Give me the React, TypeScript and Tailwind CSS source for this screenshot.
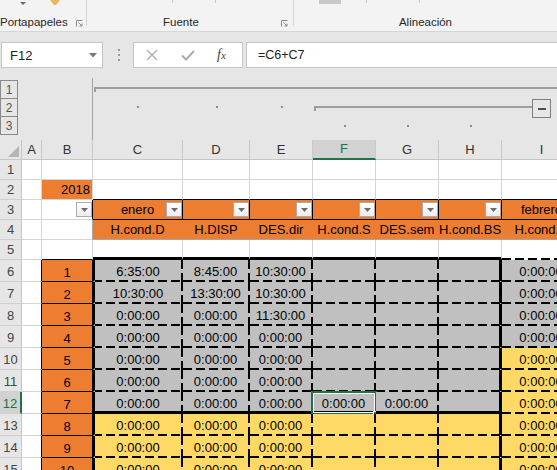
import React from 'react'

type Edge = 'grid' | 'none' | 'thin' | 'gray' | 'thick' | 'dash'
type Fill = 'white' | 'orange' | 'gray' | 'yellow'
type Col = 'A' | 'B' | 'C' | 'D' | 'E' | 'F' | 'G' | 'H' | 'I'

interface CellSpec {
  fill: Fill
  r: Edge
  b: Edge
  l?: boolean
  text?: string
  align?: 'center' | 'right'
  drop?: boolean
  sel?: boolean
}

const COLS: Col[] = ['A', 'B', 'C', 'D', 'E', 'F', 'G', 'H', 'I']
const ROWS = Array.from({ length: 15 }, (_, i) => i + 1)

const colW: Record<Col, string> = {
  A: 'w-[20px]',
  B: 'w-[51px]',
  C: 'w-[90px]',
  D: 'w-[67px]',
  E: 'w-[63px]',
  F: 'w-[63px]',
  G: 'w-[63px]',
  H: 'w-[63px]',
  I: 'w-[80px]',
}

const FILL: Record<Fill, string> = {
  white: 'bg-white',
  orange: 'bg-[#ed7d31]',
  gray: 'bg-[#c0c0c0]',
  yellow: 'bg-[#ffd966]',
}

const R: Record<Edge, string> = {
  grid: 'border-r border-r-[#d4d4d4]',
  none: 'border-r border-r-transparent',
  thin: 'border-r border-r-black',
  gray: 'border-r border-r-[#a6a6a6]',
  thick: 'border-r-[3px] border-r-black',
  dash: 'border-r-2 border-r-transparent',
}

const B: Record<Edge, string> = {
  grid: 'border-b border-b-[#d4d4d4]',
  none: 'border-b border-b-transparent',
  thin: 'border-b border-b-black',
  gray: 'border-b border-b-[#a6a6a6]',
  thick: 'border-b-[3px] border-b-black',
  dash: 'border-b-2 border-b-transparent',
}

// dashed borders drawn as gradients so the dash rhythm looks like Excel's
const DASH_R =
  '[background-image:repeating-linear-gradient(180deg,#000_0_9px,transparent_9px_13px)] [background-size:2px_100%] [background-position:right_top] [background-repeat:no-repeat] [background-origin:border-box]'
const DASH_B =
  '[background-image:repeating-linear-gradient(90deg,#000_0_9px,transparent_9px_13px)] [background-size:100%_2px] [background-position:left_bottom] [background-repeat:no-repeat] [background-origin:border-box]'
const DASH_RB =
  '[background-image:repeating-linear-gradient(180deg,#000_0_9px,transparent_9px_13px),repeating-linear-gradient(90deg,#000_0_9px,transparent_9px_13px)] [background-size:2px_100%,100%_2px] [background-position:right_top,left_bottom] [background-repeat:no-repeat] [background-origin:border-box]'

const HEAD: Partial<Record<Col, string>> = {
  C: 'H.cond.D',
  D: 'H.DISP',
  E: 'DES.dir',
  F: 'H.cond.S',
  G: 'DES.sem',
  H: 'H.cond.BS',
  I: 'H.cond.D',
}

const TIMES: Record<number, string[]> = {
  6: ['6:35:00', '8:45:00', '10:30:00'],
  7: ['10:30:00', '13:30:00', '10:30:00'],
  8: ['0:00:00', '0:00:00', '11:30:00'],
}

const grid: CellSpec = { fill: 'white', r: 'grid', b: 'grid' }

function getSpec(r: number, c: Col): CellSpec {
  const i = COLS.indexOf(c)
  const block = i >= 2 && i <= 7
  if (r === 1) return grid
  if (r === 2) {
    if (c === 'A') return grid
    if (c === 'B') return { fill: 'orange', r: 'grid', b: 'grid', text: '2018', align: 'right' }
    return { fill: 'white', r: 'grid', b: 'thin' }
  }
  if (r === 3) {
    if (c === 'A') return grid
    if (c === 'B') return { fill: 'white', r: 'thin', b: 'grid', drop: true }
    return {
      fill: 'orange',
      r: 'thin',
      b: 'thin',
      drop: true,
      text: c === 'C' ? 'enero' : c === 'I' ? 'febrero' : undefined,
    }
  }
  if (r === 4) {
    if (c === 'A') return grid
    if (c === 'B') return { fill: 'white', r: 'gray', b: 'grid' }
    return { fill: 'orange', r: 'none', b: 'gray', text: HEAD[c] }
  }
  if (r === 5) {
    if (c === 'A') return grid
    if (c === 'B') return { fill: 'white', r: 'grid', b: 'thin' }
    if (block) return { fill: 'white', r: 'grid', b: 'thick' }
    return { fill: 'white', r: 'grid', b: 'dash' }
  }
  if (c === 'A') return { fill: 'white', r: 'thin', b: 'grid' }
  if (c === 'B') return { fill: 'orange', r: 'thin', b: 'thin', text: String(r - 5) }
  if (block) {
    let text: string | undefined
    if (i <= 4) text = TIMES[r]?.[i - 2] ?? '0:00:00'
    if (r === 12 && (c === 'F' || c === 'G')) text = '0:00:00'
    return {
      fill: r <= 12 ? 'gray' : 'yellow',
      r: c === 'H' ? 'thick' : 'dash',
      b: r === 12 ? 'thick' : 'dash',
      l: c === 'C',
      text,
      sel: r === 12 && c === 'F',
    }
  }
  return { fill: r <= 9 ? 'gray' : 'yellow', r: 'dash', b: 'dash', text: '0:00:00' }
}

function DropButton() {
  return (
    <div className="absolute right-0 top-[2px] w-[16px] h-[15px] border border-[#ababab] bg-[linear-gradient(#ffffff,#ececec)] flex items-center justify-center">
      <svg width="7" height="4" viewBox="0 0 7 4">
        <path d="M0 0H7L3.5 4Z" fill="#6a6a6a" />
      </svg>
    </div>
  )
}

function Cell({ col, s, tall }: { col: Col; s: CellSpec; tall: boolean }) {
  const rd = s.r === 'dash'
  const bd = s.b === 'dash'
  const dash = rd && bd ? DASH_RB : rd ? DASH_R : bd ? DASH_B : ''
  return (
    <div
      className={`relative shrink-0 h-full flex items-center whitespace-nowrap text-[13px] text-black ${colW[col]} ${FILL[s.fill]} ${R[s.r]} ${B[s.b]} ${s.l ? 'border-l-2 border-l-black' : ''} ${dash} ${s.align === 'right' ? 'justify-end pr-[2px]' : 'justify-center'} ${tall ? 'pt-[3px]' : ''}`}
    >
      {s.text && <span className="leading-none">{s.text}</span>}
      {s.drop && <DropButton />}
      {s.sel && (
        <div className="absolute -left-[2px] -top-px -right-[3px] -bottom-[4px] border-2 border-[#217346] pointer-events-none">
          <div className="w-full h-full border border-white" />
          <div className="absolute -right-[5px] -bottom-[5px] w-[7px] h-[7px] bg-[#217346] border border-white" />
        </div>
      )}
    </div>
  )
}

function Launcher({ className }: { className?: string }) {
  return (
    <svg className={className} width="7" height="7" viewBox="0 0 7 7">
      <path d="M0.5 6.5V0.5H6.5" stroke="#8a8a8a" fill="none" />
      <path d="M2.5 2.5L6 6M6 3.5V6H3.5" stroke="#8a8a8a" fill="none" />
    </svg>
  )
}

function Dot() {
  return <div className="w-[2px] h-[2px] bg-[#8c8c8c]" />
}

export default function App() {
  return (
    <div className="w-[557px] h-[470px] overflow-hidden bg-[#e6e6e6] font-['Liberation_Sans',Arial,sans-serif] flex flex-col">
      {/* ribbon tail */}
      <div className="shrink-0 h-[32px] bg-[#f3f3f3] border-b border-[#d6d6d6] flex text-[11.5px] text-[#262626]">
        <div className="w-[86px] flex flex-col">
          <div className="h-[16px] flex items-start">
            <svg className="ml-[20px] mt-[2px]" width="6" height="4" viewBox="0 0 6 4">
              <path d="M0 0H6L3 3Z" fill="#6b6b6b" />
            </svg>
            <svg className="ml-[24px]" width="10" height="6" viewBox="0 0 10 6">
              <path d="M0 0H10L6 5H4Z" fill="#eab55c" />
            </svg>
          </div>
          <div className="h-[14px] flex items-center">
            <span className="leading-none">Portapapeles</span>
            <Launcher className="ml-auto mr-[3px]" />
          </div>
        </div>
        <div className="w-px h-[26px] bg-[#d6d6d6]" />
        <div className="w-[206px] flex flex-col">
          <div className="h-[16px] flex items-start">
            <div className="ml-[85px] w-px h-[3px] bg-[#c8c8c8]" />
            <div className="ml-[42px] w-px h-[3px] bg-[#c8c8c8]" />
          </div>
          <div className="h-[14px] flex items-center">
            <span className="ml-[76px] leading-none">Fuente</span>
            <Launcher className="ml-auto mr-[5px]" />
          </div>
        </div>
        <div className="w-px h-[26px] bg-[#d6d6d6]" />
        <div className="flex-1 flex flex-col">
          <div className="h-[16px] flex items-start">
            <div className="ml-[25px] w-[22px] h-[4px] bg-[#c8c8c8]" />
            <div className="ml-[25px] w-px h-[3px] bg-[#c8c8c8]" />
            <div className="ml-[52px] w-px h-[3px] bg-[#c8c8c8]" />
          </div>
          <div className="h-[14px] flex items-center justify-center">
            <span className="leading-none">Alineación</span>
          </div>
        </div>
      </div>

      {/* formula bar */}
      <div className="shrink-0 h-[43px] flex items-start pt-[10px]">
        <div className="ml-px w-[102px] h-[26px] bg-white border border-[#c6c6c6] flex items-center pl-[8px] pr-[5px] text-[13px] text-[#222]">
          <span className="leading-none">F12</span>
          <svg className="ml-auto" width="8" height="5" viewBox="0 0 8 5">
            <path d="M0 0H8L4 4.5Z" fill="#777" />
          </svg>
        </div>
        <div className="ml-[14px] w-[3px] h-[26px] flex flex-col items-center justify-center gap-[3px]">
          <div className="w-[2px] h-[2px] bg-[#9a9a9a]" />
          <div className="w-[2px] h-[2px] bg-[#9a9a9a]" />
          <div className="w-[2px] h-[2px] bg-[#9a9a9a]" />
        </div>
        <div className="ml-[13px] w-[110px] h-[26px] bg-white border border-[#c6c6c6] flex items-center">
          <svg className="ml-[12px]" width="12" height="12" viewBox="0 0 12 12">
            <path d="M1 1L11 11M11 1L1 11" stroke="#ababab" strokeWidth="1.3" />
          </svg>
          <svg className="ml-[23px]" width="14" height="11" viewBox="0 0 14 11">
            <path d="M1 5.5L5 9.5L13 1" stroke="#ababab" strokeWidth="2" fill="none" />
          </svg>
          <span className="ml-[22px] font-['Liberation_Serif',serif] italic text-[14px] text-[#444] leading-none">
            f<span className="text-[11px]">x</span>
          </span>
        </div>
        <div className="ml-[3px] flex-1 h-[26px] bg-white border border-r-0 border-[#c6c6c6] flex items-center pl-[11px] text-[12.5px] text-[#222]">
          <span className="leading-none">=C6+C7</span>
        </div>
      </div>

      {/* outline symbols */}
      <div className="shrink-0 h-[65px] flex">
        <div className="w-[92px] pt-[5px] flex flex-col">
          {['1', '2', '3'].map((n, i) => (
            <div
              key={n}
              className={`w-[18px] h-[19px] border border-[#8a8a8a] flex items-center justify-center text-[12px] text-[#555] ${i ? '-mt-px' : ''}`}
            >
              {n}
            </div>
          ))}
        </div>
        <div className="flex-1 mt-[3px] border-l border-[#a3a3a3] flex flex-col">
          <div className="mt-[9px] ml-px h-[2px] bg-[#9d9d9d]" />
          <div className="ml-px w-[2px] h-[3px] bg-[#9d9d9d]" />
          <div className="mt-[7px] h-[19px] flex items-start">
            <div className="w-[90px] mt-[7px] flex justify-center"><Dot /></div>
            <div className="w-[67px] mt-[7px] flex justify-center"><Dot /></div>
            <div className="w-[63px] mt-[7px] flex justify-center"><Dot /></div>
            <div className="flex-1 ml-px mt-[7px] flex flex-col">
              <div className="h-[2px] bg-[#9d9d9d]" />
              <div className="w-[2px] h-[3px] bg-[#9d9d9d]" />
            </div>
            <div className="w-[19px] h-[19px] border border-[#7f7f7f] flex items-center justify-center">
              <div className="w-[8px] h-[2px] bg-[#505050]" />
            </div>
            <div className="w-[6px]" />
          </div>
          <div className="h-[19px] flex items-start">
            <div className="w-[220px]" />
            <div className="w-[63px] mt-[7px] flex justify-center"><Dot /></div>
            <div className="w-[63px] mt-[7px] flex justify-center"><Dot /></div>
            <div className="w-[63px] mt-[7px] flex justify-center"><Dot /></div>
          </div>
        </div>
      </div>

      {/* sheet */}
      <div className="flex flex-col bg-white">
        <div className="flex h-[20px] shrink-0">
          <div className="w-[22px] shrink-0 h-full bg-[#e6e6e6] border-r border-b border-[#c6c6c6] flex items-end justify-end pr-[2px] pb-[2px]">
            <svg width="11" height="11" viewBox="0 0 11 11">
              <path d="M11 0V11H0Z" fill="#b5b5b5" />
            </svg>
          </div>
          {COLS.map((c) => (
            <div
              key={c}
              className={`shrink-0 ${colW[c]} h-full flex items-center justify-center text-[13px] border-r border-r-[#c9c9c9] ${c === 'F' ? 'bg-[#d2d2d2] text-[#217346] border-b-2 border-b-[#217346]' : 'bg-[#e6e6e6] text-[#333] border-b border-b-[#c6c6c6]'}`}
            >
              {c}
            </div>
          ))}
        </div>
        {ROWS.map((r) => (
          <div key={r} className={`flex shrink-0 ${r <= 5 ? 'h-[20px]' : 'h-[22px]'}`}>
            <div
              className={`w-[22px] shrink-0 h-full flex items-center justify-center text-[13px] border-b border-b-[#d0d0d0] ${r > 5 ? 'pt-[2px]' : ''} ${r === 12 ? 'bg-[#d2d2d2] text-[#217346] border-r-2 border-r-[#217346]' : 'bg-[#e6e6e6] text-[#444] border-r border-r-[#c6c6c6]'}`}
            >
              {r}
            </div>
            {COLS.map((c) => (
              <Cell key={c} col={c} s={getSpec(r, c)} tall={r > 5} />
            ))}
          </div>
        ))}
      </div>
    </div>
  )
}
